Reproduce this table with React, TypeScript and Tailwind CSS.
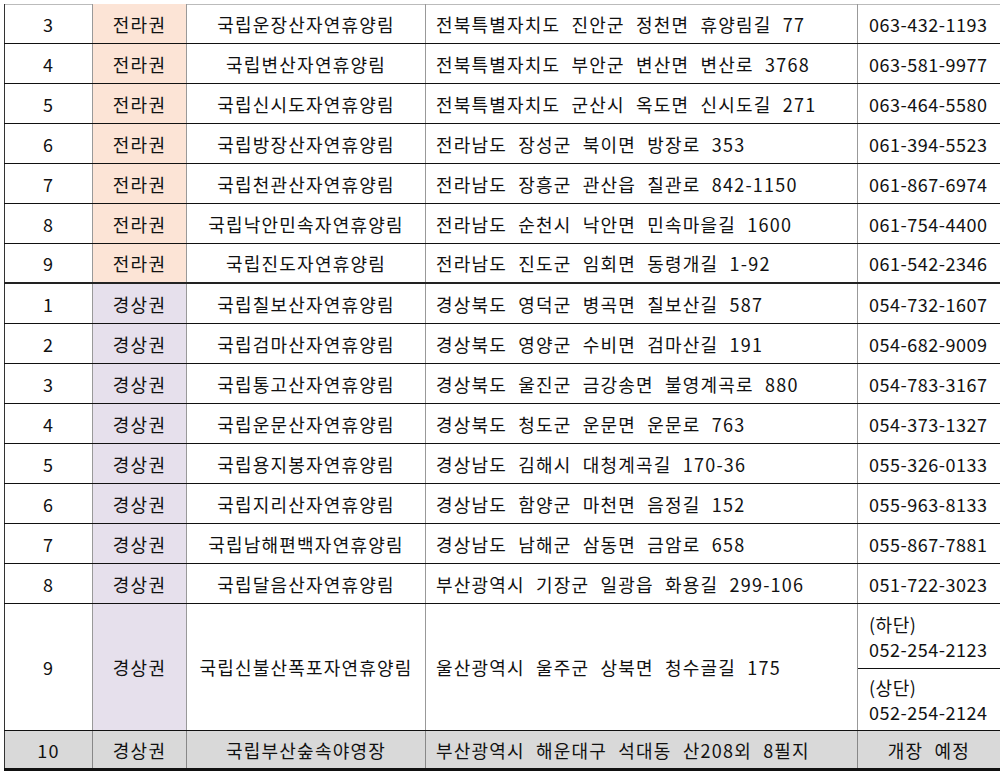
import React from "react";

type Row = {
  no: string;
  region: "전라권" | "경상권";
  name: string;
  addr: string;
  phone: string;
};

const jeolla: Row[] = [
  { no: "3", region: "전라권", name: "국립운장산자연휴양림", addr: "전북특별자치도 진안군 정천면 휴양림길 77", phone: "063-432-1193" },
  { no: "4", region: "전라권", name: "국립변산자연휴양림", addr: "전북특별자치도 부안군 변산면 변산로 3768", phone: "063-581-9977" },
  { no: "5", region: "전라권", name: "국립신시도자연휴양림", addr: "전북특별자치도 군산시 옥도면 신시도길 271", phone: "063-464-5580" },
  { no: "6", region: "전라권", name: "국립방장산자연휴양림", addr: "전라남도 장성군 북이면 방장로 353", phone: "061-394-5523" },
  { no: "7", region: "전라권", name: "국립천관산자연휴양림", addr: "전라남도 장흥군 관산읍 칠관로 842-1150", phone: "061-867-6974" },
  { no: "8", region: "전라권", name: "국립낙안민속자연휴양림", addr: "전라남도 순천시 낙안면 민속마을길 1600", phone: "061-754-4400" },
  { no: "9", region: "전라권", name: "국립진도자연휴양림", addr: "전라남도 진도군 임회면 동령개길 1-92", phone: "061-542-2346" },
];

const gyeongsang: Row[] = [
  { no: "1", region: "경상권", name: "국립칠보산자연휴양림", addr: "경상북도 영덕군 병곡면 칠보산길 587", phone: "054-732-1607" },
  { no: "2", region: "경상권", name: "국립검마산자연휴양림", addr: "경상북도 영양군 수비면 검마산길 191", phone: "054-682-9009" },
  { no: "3", region: "경상권", name: "국립통고산자연휴양림", addr: "경상북도 울진군 금강송면 불영계곡로 880", phone: "054-783-3167" },
  { no: "4", region: "경상권", name: "국립운문산자연휴양림", addr: "경상북도 청도군 운문면 운문로 763", phone: "054-373-1327" },
  { no: "5", region: "경상권", name: "국립용지봉자연휴양림", addr: "경상남도 김해시 대청계곡길 170-36", phone: "055-326-0133" },
  { no: "6", region: "경상권", name: "국립지리산자연휴양림", addr: "경상남도 함양군 마천면 음정길 152", phone: "055-963-8133" },
  { no: "7", region: "경상권", name: "국립남해편백자연휴양림", addr: "경상남도 남해군 삼동면 금암로 658", phone: "055-867-7881" },
  { no: "8", region: "경상권", name: "국립달음산자연휴양림", addr: "부산광역시 기장군 일광읍 화용길 299-106", phone: "051-722-3023" },
];

const regionBg = {
  전라권: "bg-[#fce4d6]",
  경상권: "bg-[#e6e0ec]",
};

function TableRow({ r, last }: { r: Row; last?: boolean }) {
  return (
    <div className={`flex h-[40px] ${last ? "border-b-2 border-[#222]" : "border-b border-[#111]"}`}>
      <div className="w-[89px] border-l border-r border-l-[#333] border-r-[#999] flex items-center justify-center">{r.no}</div>
      <div className={`w-[94px] border-r border-[#999] flex items-center justify-center ${regionBg[r.region]}`}>{r.region}</div>
      <div className="w-[239px] border-r border-[#999] flex items-center justify-center">{r.name}</div>
      <div className="w-[432px] border-r border-[#999] flex items-center pl-[10px] [word-spacing:6px]">{r.addr}</div>
      <div className="w-[150px] flex items-center pl-[11px] tracking-[0.5px]">{r.phone}</div>
    </div>
  );
}

export default function App() {
  return (
    <div
      className="w-[1000px] h-[772px] overflow-hidden bg-white text-[#111] text-[18px] leading-none tracking-[1.2px]"
      style={{ fontFamily: '"Noto Sans CJK KR", "Noto Sans", sans-serif' }}
    >
      <div className="pt-[4px] pl-[4px] w-[1010px]">
        <div className="border-t border-[#bbb]" />
        <div className="-mt-px">
          {jeolla.map((r, i) => (
            <TableRow key={"j" + r.no} r={r} last={i === jeolla.length - 1} />
          ))}
          {gyeongsang.map((r) => (
            <TableRow key={"g" + r.no} r={r} />
          ))}

          {/* 9 - two phone numbers */}
          <div className="flex h-[127px] border-b border-[#111]">
            <div className="w-[89px] border-l border-r border-l-[#333] border-r-[#999] flex items-center justify-center">9</div>
            <div className={`w-[94px] border-r border-[#999] flex items-center justify-center ${regionBg["경상권"]}`}>경상권</div>
            <div className="w-[239px] border-r border-[#999] flex items-center justify-center">국립신불산폭포자연휴양림</div>
            <div className="w-[432px] border-r border-[#999] flex items-center pl-[10px] [word-spacing:6px]">울산광역시 울주군 상북면 청수골길 175</div>
            <div className="w-[150px] flex flex-col tracking-[0.5px]">
              <div className="h-[65px] border-b border-[#111] flex flex-col justify-center gap-[7px] pl-[11px]">
                <span>(하단)</span>
                <span>052-254-2123</span>
              </div>
              <div className="flex-1 flex flex-col justify-center gap-[7px] pl-[11px]">
                <span>(상단)</span>
                <span>052-254-2124</span>
              </div>
            </div>
          </div>

          {/* 10 - opening soon */}
          <div className="flex h-[40px] bg-[#d9d9d9] border-b-[3px] border-[#111]">
            <div className="w-[89px] border-l border-r border-l-[#333] border-r-[#888] flex items-center justify-center">10</div>
            <div className="w-[94px] border-r border-[#888] flex items-center justify-center">경상권</div>
            <div className="w-[239px] border-r border-[#888] flex items-center justify-center">국립부산숲속야영장</div>
            <div className="w-[432px] border-r border-[#888] flex items-center pl-[10px] [word-spacing:6px]">부산광역시 해운대구 석대동 산208외 8필지</div>
            <div className="w-[142px] flex items-center justify-center [word-spacing:6px]">개장 예정</div>
          </div>
        </div>
      </div>
    </div>
  );
}
